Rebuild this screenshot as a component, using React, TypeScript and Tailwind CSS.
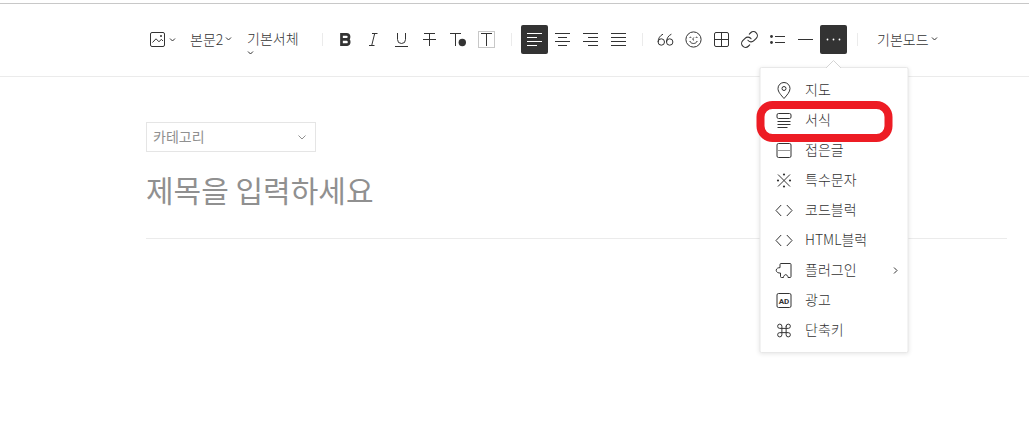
import React, { useState } from "react";
import { Command, Link } from "lucide-react";

type IconProps = {
  width?: number;
  height?: number;
  children: React.ReactNode;
};

function Icon({ width = 15, height = 15, children }: IconProps) {
  return (
    <svg
      width={width}
      height={height}
      viewBox={`0 0 ${width} ${height}`}
      fill="none"
      stroke="currentColor"
      className="shrink-0 overflow-visible"
      aria-hidden="true"
    >
      {children}
    </svg>
  );
}

function ChevronDown() {
  return (
    <Icon width={7} height={4}>
      <path d="M1 .5l2.5 2.5L6 .5" />
    </Icon>
  );
}

function Separator() {
  return <span className="mt-2 ml-2.5 mr-[9px] h-[13px] w-px shrink-0 bg-[#ebebeb]" />;
}

type ToolProps = {
  label: string;
  active?: boolean;
  wide?: boolean;
  onClick?: () => void;
  children: React.ReactNode;
};

function Tool({ label, active, wide, onClick, children }: ToolProps) {
  return (
    <button
      type="button"
      aria-label={label}
      onClick={onClick}
      className={`flex h-[29px] shrink-0 items-center justify-center rounded-xs ${
        wide ? "w-7" : "w-[27px]"
      } ${active ? "bg-[#333] text-white" : "hover:bg-gray-100"}`}
    >
      {children}
    </button>
  );
}

const codeIcon = (
  <Icon>
    <path d="M4.700 2L-.5 7.500l5.200 5.500M10.300 2l5.200 5.500-5.200 5.500" />
  </Icon>
);

const menuItems = [
  {
    label: "지도",
    icon: (
      <Icon height={17}>
        <path d="M7.500 16.500C4.500 13 1.500 10 1.500 6.500a6 6 0 0 1 12 0c0 3.500-3 6.500-6 10z" />
        <circle cx="7.500" cy="6.500" r="2" />
      </Icon>
    ),
  },
  {
    label: "서식",
    marked: true,
    icon: (
      <Icon height={17}>
        <rect x=".5" y="1.500" width="14" height="5" rx="1.500" />
        <path d="M1 9.500h13M1 12.500h13M1 15.500h10" />
      </Icon>
    ),
  },
  {
    label: "접은글",
    icon: (
      <Icon>
        <rect x=".5" y=".5" width="14" height="14" rx="1.500" />
        <path d="M2 7.500h11" strokeDasharray="1 1" />
      </Icon>
    ),
  },
  {
    label: "특수문자",
    icon: (
      <Icon>
        <path d="M1.500 1.500l12 12M13.500 1.500l-12 12" />
        <g fill="currentColor" stroke="none">
          <circle cx="7.500" cy="1.500" r="1.100" />
          <circle cx="7.500" cy="13.500" r="1.100" />
          <circle cx="1.500" cy="7.500" r="1.100" />
          <circle cx="13.500" cy="7.500" r="1.100" />
        </g>
      </Icon>
    ),
  },
  { label: "코드블럭", icon: codeIcon },
  { label: "HTML블럭", icon: codeIcon },
  {
    label: "플러그인",
    more: true,
    icon: (
      <Icon>
        <path d="M4.500.5h9a1 1 0 0 1 1 1v12a1 1 0 0 1-1 1h-2c0-1-.3-1.500-.7-2a2 2 0 0 0-3.100 0c-.4.500-.7 1-.7 2h-2a1 1 0 0 1-1-1V10C2 10.300-.3 9.300-.3 7.300S2 4.500 3.500 4.700V1.500a1 1 0 0 1 1-1z" />
      </Icon>
    ),
  },
  {
    label: "광고",
    icon: (
      <Icon>
        <rect x=".5" y=".5" width="14" height="14" rx="1.500" />
        <text
          x="7.500"
          y="10.500"
          textAnchor="middle"
          fill="currentColor"
          stroke="none"
          className="font-['Roboto',sans-serif] text-[8px] font-bold"
        >
          AD
        </text>
      </Icon>
    ),
  },
  {
    label: "단축키",
    icon: <Command size={17} strokeWidth={1.4} className="-mx-px shrink-0" />,
  },
];

function MoreMenu() {
  return (
    <div className="absolute top-[42px] left-1/2 z-10 w-[149px] -translate-x-1/2 rounded-xs border border-[#e8e8e8] bg-white py-[7px] shadow-[0_1px_4px_rgba(0,0,0,0.1)]">
      {/* Arrow */}
      <svg
        width="15"
        height="9"
        viewBox="0 0 15 9"
        className="absolute -top-[9px] left-1/2 -translate-x-1/2"
        aria-hidden="true"
      >
        <path d="M0 9L7.500 1.500 15 9" fill="#fff" stroke="#d4d4d4" />
      </svg>
      <ul>
        {menuItems.map((item) => (
          <li key={item.label} className="relative">
            <button
              type="button"
              className="flex h-[30px] w-full items-center pr-2.5 pl-4 hover:bg-gray-50"
            >
              <span className="flex w-[15px] shrink-0 justify-center">
                {item.icon}
              </span>
              <span className="ml-3.5 pb-0.5 whitespace-nowrap">{item.label}</span>
              {item.more && (
                <span className="ml-auto">
                  <Icon width={4} height={7}>
                    <path d="M.5.500l3 3-3 3" />
                  </Icon>
                </span>
              )}
            </button>
            {item.marked && (
              <span className="pointer-events-none absolute -top-1 -left-1 z-10 h-[41px] w-[136px] rounded-2xl border-8 border-[#ed1c24]" />
            )}
          </li>
        ))}
      </ul>
    </div>
  );
}

export default function App() {
  const [menuOpen, setMenuOpen] = useState(true);
  const [title, setTitle] = useState("");

  return (
    <div className="min-h-screen bg-white pt-[3px] font-['Noto_Sans_CJK_KR',sans-serif] text-sm font-light text-[#333]">
      {/* TOOLBAR */}
      <header className="flex items-start border-t border-b border-t-[#c8c8c8] border-b-[#ebebeb] pt-[21px] pb-[22px] pl-[146px]">
        <button
          type="button"
          aria-label="이미지"
          className="flex h-[29px] w-11 shrink-0 items-center gap-1 pl-1"
        >
          <Icon>
            <rect x=".5" y=".5" width="14" height="14" rx="1.500" />
            <path d="M2.500 10.500l3.500-3.700 3 3 2.300-2.500L13 9" />
            <circle cx="11" cy="4" r="1" fill="currentColor" stroke="none" />
          </Icon>
          <ChevronDown />
        </button>
        <button
          type="button"
          className="flex h-7 w-[57px] shrink-0 items-center gap-0.5 pb-px whitespace-nowrap"
        >
          본문2
          <ChevronDown />
        </button>
        <button
          type="button"
          className="flex h-[29px] w-[65px] shrink-0 flex-col items-start gap-[3px] pt-[3px] leading-5 whitespace-nowrap"
        >
          기본서체
          <ChevronDown />
        </button>

        <Separator />
        <div className="flex gap-px">
          <Tool label="굵게">
            <Icon>
              <path
                d="M3.500 7.400h5.500a2.700 2.700 0 0 1 0 5.300H3.500V2.300h5a2.500 2.500 0 0 1 0 5.100"
                strokeWidth="2.700"
              />
            </Icon>
          </Tool>
          <Tool label="기울임">
            <Icon>
              <path d="M6 1.500h5.500M3 13.500h5.500M8.700 1.500l-3 12" />
            </Icon>
          </Tool>
          <Tool label="밑줄">
            <Icon>
              <path d="M3.500 1v6.500a4 4 0 0 0 8 0V1M1 14.500h13" />
            </Icon>
          </Tool>
          <Tool label="취소선">
            <Icon>
              <path d="M2 1.500h11M7.500 1.500V14M1 7.500h13" />
            </Icon>
          </Tool>
          <Tool label="글자색" wide>
            <Icon width={16}>
              <path d="M0 1.500h11M5.500 1.500V14" />
              <circle cx="12.300" cy="10.500" r="3.700" fill="currentColor" stroke="none" />
            </Icon>
          </Tool>
          <Tool label="배경색" wide>
            <Icon width={18} height={17}>
              <rect x=".5" y=".5" width="16" height="16" stroke="#c8c8c8" />
              <path d="M3 2.500h11M8.500 2.500V15" />
            </Icon>
          </Tool>
        </div>

        <Separator />
        <div className="flex gap-px">
          <Tool label="왼쪽 정렬" active>
            <Icon>
              <path d="M0 1.500h15M0 5.500h10M0 9.500h15M0 13.500h10" />
            </Icon>
          </Tool>
          <Tool label="가운데 정렬">
            <Icon>
              <path d="M0 1.500h15M3 5.500h9M0 9.500h15M3 13.500h9" />
            </Icon>
          </Tool>
          <Tool label="오른쪽 정렬">
            <Icon>
              <path d="M0 1.500h15M5 5.500h10M0 9.500h15M5 13.500h10" />
            </Icon>
          </Tool>
          <Tool label="양쪽 정렬">
            <Icon>
              <path d="M0 1.500h15M0 5.500h15M0 9.500h15M0 13.500h15" />
            </Icon>
          </Tool>
        </div>

        <Separator />
        <div className="flex gap-px">
          <Tool label="인용">
            <Icon>
              <circle cx="3.300" cy="10" r="3.200" />
              <circle cx="11.700" cy="10" r="3.200" />
              <path d="M.1 10C.1 6.500 2 3.500 5 2.200M8.500 10c0-3.500 1.900-6.500 4.900-7.800" />
            </Icon>
          </Tool>
          <Tool label="이모티콘">
            <Icon width={17} height={17}>
              <circle cx="8.500" cy="8.500" r="7.600" />
              <path d="M4.500 6.800c.3-.8 1.500-.8 1.800 0M10.700 6.800c.3-.8 1.500-.8 1.800 0M8.800 6.500c-1 1.200-1.500 2.500.2 2.700M4.800 10c1 3.300 6.400 3.300 7.400 0" />
            </Icon>
          </Tool>
          <Tool label="표">
            <Icon>
              <rect x=".5" y=".5" width="14" height="14" rx="1.500" />
              <path d="M7.500 1v13M1 7.500h13" />
            </Icon>
          </Tool>
          <Tool label="링크">
            <Link size={19} strokeWidth={1.4} className="shrink-0" />
          </Tool>
          <Tool label="목록">
            <Icon>
              <path d="M5 4.500h10M5 10.500h10" />
              <g fill="currentColor" stroke="none">
                <circle cx="1.500" cy="4.500" r="1.400" />
                <circle cx="1.500" cy="10.500" r="1.400" />
              </g>
            </Icon>
          </Tool>
          <Tool label="구분선">
            <Icon>
              <path d="M0 7.500h15" />
            </Icon>
          </Tool>
          <div className="relative">
            <Tool label="더보기" active={menuOpen} onClick={() => setMenuOpen(!menuOpen)}>
              <Icon>
                <g fill="currentColor" stroke="none">
                  <circle cx="1.500" cy="7.500" r=".9" />
                  <circle cx="7.500" cy="7.500" r=".9" />
                  <circle cx="13.500" cy="7.500" r=".9" />
                </g>
              </Icon>
            </Tool>
            {menuOpen && <MoreMenu />}
          </div>
        </div>

        <Separator />
        <button
          type="button"
          className="flex h-7 shrink-0 items-center gap-0.5 px-2.5 pb-px whitespace-nowrap"
        >
          기본모드
          <ChevronDown />
        </button>
      </header>

      {/* EDITOR */}
      <main className="pt-[45px] pr-[22px] pl-[146px]">
        <div className="relative w-[170px] text-[#909090]">
          <select
            aria-label="카테고리"
            className="block h-[30px] w-full appearance-none border border-[#e5e5e5] bg-white px-1.5 pb-0.5 leading-5 font-normal outline-none"
          >
            <option>카테고리</option>
          </select>
          <span className="pointer-events-none absolute inset-y-0 right-2.5 flex items-center">
            <Icon width={8} height={5}>
              <path d="M.5.500L4 4 7.500.5" />
            </Icon>
          </span>
        </div>
        <div className="mt-3.5 border-b border-[#ebebeb] pb-6">
          <input
            type="text"
            aria-label="제목"
            value={title}
            onChange={(e) => setTitle(e.target.value)}
            placeholder="제목을 입력하세요"
            className="block h-12 w-full bg-transparent pb-0.5 text-3xl font-normal outline-none placeholder:text-[#909090]"
          />
        </div>
      </main>
    </div>
  );
}
